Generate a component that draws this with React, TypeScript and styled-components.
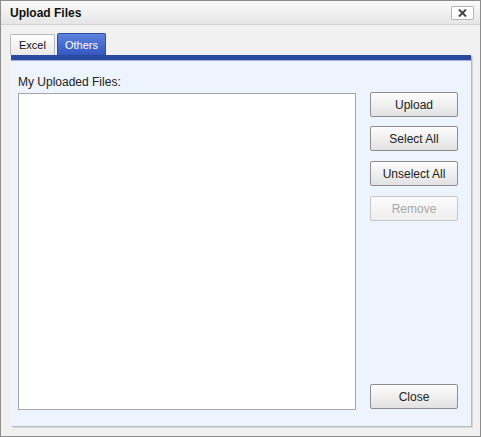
import React from "react";
import styled, { createGlobalStyle } from "styled-components";

const GlobalStyle = createGlobalStyle`
  html, body {
    margin: 0;
    padding: 0;
    background: #ffffff;
  }
  body {
    font-family: "Liberation Sans", Arial, sans-serif;
    font-size: 12px;
  }
`;

const buttons = [
  { label: "Upload", disabled: false, gap: 0 },
  { label: "Select All", disabled: false, gap: 9 },
  { label: "Unselect All", disabled: false, gap: 10 },
  { label: "Remove", disabled: true, gap: 10 },
];

const App: React.FC = () => {
  return (
    <>
      <GlobalStyle />
      <SWindow>
        <STitleBar>
          <span className="title">Upload Files</span>
          <SCloseButton aria-label="close">
            <svg width="9" height="8" viewBox="0 0 9 8">
              <path d="M1 0.5 L8 7.5 M8 0.5 L1 7.5" stroke="#444" strokeWidth="2" />
            </svg>
          </SCloseButton>
        </STitleBar>
        <SBody>
          <STabRow>
            <STab>Excel</STab>
            <STab $active>Others</STab>
          </STabRow>
          <SPanel>
            <SStripe />
            <SPanelContent>
              <SFilesColumn>
                <SLabel>My Uploaded Files:</SLabel>
                <SFileList />
              </SFilesColumn>
              <SButtonColumn>
                {buttons.map((b) => (
                  <SButton key={b.label} disabled={b.disabled} $gap={b.gap}>
                    {b.label}
                  </SButton>
                ))}
                <SButton $push>Close</SButton>
              </SButtonColumn>
            </SPanelContent>
          </SPanel>
        </SBody>
      </SWindow>
    </>
  );
};

const SWindow = styled.div`
  width: 481px;
  height: 437px;
  box-sizing: border-box;
  border: 1px solid #8c8c8c;
  background: #f1f1f1;
  display: flex;
  flex-direction: column;
`;

const STitleBar = styled.div`
  height: 23px;
  flex: none;
  display: flex;
  align-items: center;
  justify-content: space-between;
  padding: 0 6px 0 9px;
  background: linear-gradient(#fafafa, #e6e6e6);
  border-bottom: 1px solid #d2d2d2;

  .title {
    font-weight: bold;
    font-size: 12px;
    color: #111;
  }
`;

const SCloseButton = styled.button`
  width: 23px;
  height: 14px;
  padding: 0;
  margin-top: 1px;
  box-sizing: border-box;
  border: 1px solid #b4b4b4;
  border-radius: 1px;
  background: #ffffff;
  display: flex;
  align-items: center;
  justify-content: center;
`;

const SBody = styled.div`
  flex: 1;
  display: flex;
  flex-direction: column;
  padding: 9px 9px 10px 9px;
`;

const STabRow = styled.div`
  display: flex;
  align-items: flex-end;
  gap: 2px;
  height: 21px;
`;

const STab = styled.div<{ $active?: boolean }>`
  box-sizing: border-box;
  height: ${(p) => (p.$active ? "22px" : "21px")};
  padding: 0 ${(p) => (p.$active ? "7px" : "8px")};
  display: flex;
  align-items: center;
  font-size: 11px;
  border: 1px solid ${(p) => (p.$active ? "#2f4fa6" : "#b8b8b8")};
  border-bottom: none;
  border-radius: 2px 2px 0 0;
  color: ${(p) => (p.$active ? "#ffffff" : "#111")};
  background: ${(p) =>
    p.$active
      ? "linear-gradient(#5c82dc, #3458c0)"
      : "linear-gradient(#ffffff, #e9e9e9)"};
`;

const SPanel = styled.div`
  flex: 1;
  margin-left: 1px;
  display: flex;
  flex-direction: column;
  background: #edf4fd;
  box-shadow: 1px 1px 0 #b8bcc2, 2px 2px 0 #d4d6d8;
`;

const SStripe = styled.div`
  height: 6px;
  flex: none;
  background: #2a4a9f;
  border-bottom: 1px solid #9fb2df;
  box-sizing: border-box;
`;

const SPanelContent = styled.div`
  flex: 1;
  display: flex;
  gap: 14px;
  padding: 14px 12px 16px 7px;
`;

const SFilesColumn = styled.div`
  display: flex;
  flex-direction: column;
`;

const SLabel = styled.div`
  font-size: 12px;
  line-height: 14px;
  color: #222;
  margin-bottom: 4px;
`;

const SFileList = styled.div`
  width: 338px;
  flex: 1;
  box-sizing: border-box;
  background: #ffffff;
  border: 1px solid #a6a6a6;
`;

const SButtonColumn = styled.div`
  display: flex;
  flex-direction: column;
  padding-top: 17px;
`;

const SButton = styled.button<{ $gap?: number; $push?: boolean }>`
  width: 88px;
  height: 25px;
  box-sizing: border-box;
  margin-top: ${(p) => (p.$push ? "auto" : `${p.$gap ?? 0}px`)};
  margin-bottom: ${(p) => (p.$push ? "1px" : "0")};
  padding: 0;
  font-family: "Liberation Sans", Arial, sans-serif;
  font-size: 12px;
  color: #222;
  border: 1px solid #8e8e8e;
  border-radius: 2px;
  background: linear-gradient(#fdfdfd, #e2e2e2);

  &:disabled {
    color: #a8a8a8;
    border-color: #c6c6c6;
    background: linear-gradient(#fbfbfb, #eeeeee);
  }
`;

export default App;
